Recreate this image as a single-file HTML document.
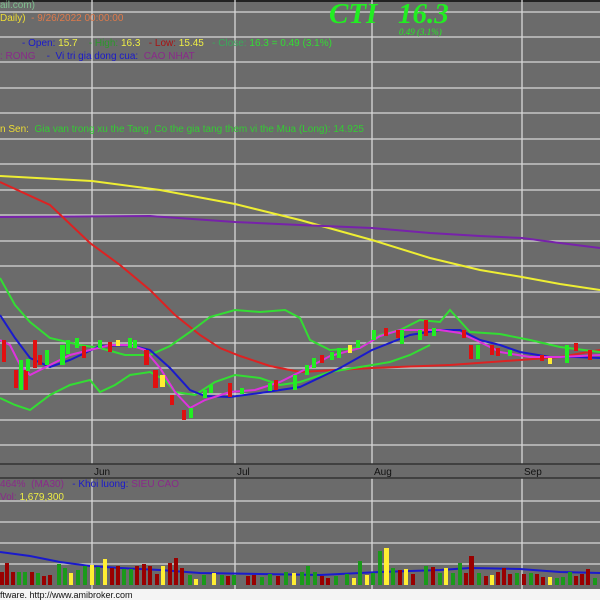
<!DOCTYPE html>
<html><head><meta charset="utf-8"><style>
body{margin:0;width:600px;height:600px;overflow:hidden;background:#6b6b6b;font-family:"Liberation Sans",sans-serif}
svg{position:absolute;left:0;top:0}
.t{position:absolute;font-size:10px;white-space:nowrap;line-height:12px}
</style></head><body>
<svg width="600" height="600" xmlns="http://www.w3.org/2000/svg">
<rect width="600" height="600" fill="#6b6b6b"/>
<rect width="600" height="2" fill="#222"/>
<g stroke="#d8d8d8" stroke-width="1.3">
<line x1="0" y1="12" x2="600" y2="12"/><line x1="0" y1="37" x2="600" y2="37"/><line x1="0" y1="62" x2="600" y2="62"/><line x1="0" y1="88" x2="600" y2="88"/><line x1="0" y1="113" x2="600" y2="113"/><line x1="0" y1="139" x2="600" y2="139"/><line x1="0" y1="164" x2="600" y2="164"/><line x1="0" y1="190" x2="600" y2="190"/><line x1="0" y1="215" x2="600" y2="215"/><line x1="0" y1="241" x2="600" y2="241"/><line x1="0" y1="266" x2="600" y2="266"/><line x1="0" y1="292" x2="600" y2="292"/><line x1="0" y1="317" x2="600" y2="317"/><line x1="0" y1="343" x2="600" y2="343"/><line x1="0" y1="368" x2="600" y2="368"/><line x1="0" y1="394" x2="600" y2="394"/><line x1="0" y1="420" x2="600" y2="420"/><line x1="0" y1="445" x2="600" y2="445"/>
<line x1="0" y1="501" x2="600" y2="501"/><line x1="0" y1="522" x2="600" y2="522"/><line x1="0" y1="543" x2="600" y2="543"/><line x1="0" y1="564" x2="600" y2="564"/>
<line x1="92" y1="0" x2="92" y2="589"/><line x1="235" y1="0" x2="235" y2="589"/><line x1="372" y1="0" x2="372" y2="589"/><line x1="522" y1="0" x2="522" y2="589"/>
</g>
<rect x="0" y="464" width="600" height="14" fill="#6b6b6b"/>
<line x1="0" y1="464" x2="600" y2="464" stroke="#333" stroke-width="1.5"/>
<line x1="0" y1="478" x2="600" y2="478" stroke="#333" stroke-width="1.5"/>
<g font-size="10" fill="#111" font-family="Liberation Sans"><text x="94" y="475">Jun</text><text x="237" y="475">Jul</text><text x="374" y="475">Aug</text><text x="524" y="475">Sep</text></g>
<g fill="none" stroke-width="2">
<polyline stroke="#eeee33" points="0,176 92,181 160,190 235,204 300,220 372,240 430,258 480,270 522,277 560,284 600,290"/>
<polyline stroke="#7722aa" points="0,217 150,216 235,222 300,225 372,228 430,233 480,236 522,238 560,243 600,248"/>
<polyline stroke="#dd2222" points="0,182 50,205 90,243 120,265 150,290 175,315 200,335 220,348 240,356 270,366 300,372 372,368 450,365 520,360 560,357 600,350"/>
<polyline stroke="#33dd33" points="0,278 15,305 30,322 50,338 80,345 100,348 125,355 150,355 170,346 190,332 210,317 235,310 260,312 285,310 300,318 310,340 330,350 360,348 380,335 400,330 420,320 440,322 450,310 470,332 500,334 530,340 560,347 600,352"/>
<polyline stroke="#33dd33" points="0,398 15,405 30,410 50,395 70,385 90,380 100,392 115,385 130,375 150,372 165,380 175,392 195,395 215,382 235,375 260,378 280,385 300,382 330,372 360,367 390,362 410,355 430,345"/>
<polyline stroke="#1a1acc" points="0,315 15,338 30,358 50,367 70,360 100,346 130,345 150,350 170,368 190,390 205,396 230,397 260,393 300,387 340,368 372,350 410,335 440,330 460,330 480,340 500,345 520,352 550,357 575,357 600,358"/>
<polyline stroke="#dd33dd" points="0,340 10,345 20,365 30,375 50,365 70,355 90,350 110,345 130,345 145,350 160,368 175,392 190,408 205,400 230,392 255,390 280,382 300,372 330,356 360,348 380,336 400,330 420,330 440,330 460,333 480,342 500,352 530,357 560,357 580,356 600,355"/>
</g>
<g>
<rect x="2" y="340" width="4" height="22" fill="#e01010"/><rect x="14" y="370" width="4" height="18" fill="#e01010"/><rect x="24" y="370" width="4" height="20" fill="#e01010"/><rect x="33" y="340" width="4" height="28" fill="#e01010"/><rect x="38" y="355" width="4" height="10" fill="#e01010"/>
<rect x="19" y="360" width="4" height="30" fill="#22ee22"/><rect x="26" y="359" width="4" height="12" fill="#22ee22"/><rect x="45" y="350" width="4" height="15" fill="#22ee22"/>
<rect x="60" y="345" width="5" height="20" fill="#22ee22"/><rect x="66" y="340" width="4" height="14" fill="#22ee22"/><rect x="75" y="338" width="4" height="10" fill="#22ee22"/><rect x="82" y="346" width="4" height="12" fill="#e01010"/>
<rect x="98" y="340" width="4" height="8" fill="#22ee22"/><rect x="108" y="342" width="4" height="10" fill="#e01010"/><rect x="116" y="340" width="4" height="6" fill="#ffee33"/><rect x="128" y="338" width="4" height="10" fill="#22ee22"/><rect x="133" y="340" width="4" height="8" fill="#22ee22"/>
<rect x="144" y="350" width="5" height="15" fill="#e01010"/><rect x="153" y="370" width="5" height="18" fill="#e01010"/><rect x="160" y="375" width="5" height="12" fill="#ffee33"/><rect x="170" y="395" width="4" height="10" fill="#e01010"/><rect x="182" y="410" width="4" height="10" fill="#e01010"/><rect x="189" y="408" width="4" height="10" fill="#22ee22"/>
<rect x="203" y="390" width="4" height="8" fill="#22ee22"/><rect x="209" y="385" width="4" height="8" fill="#22ee22"/><rect x="228" y="383" width="4" height="14" fill="#e01010"/><rect x="240" y="388" width="4" height="6" fill="#22ee22"/><rect x="268" y="383" width="4" height="8" fill="#22ee22"/><rect x="274" y="380" width="4" height="10" fill="#e01010"/><rect x="293" y="375" width="4" height="15" fill="#22ee22"/><rect x="305" y="365" width="4" height="10" fill="#22ee22"/><rect x="312" y="358" width="4" height="10" fill="#22ee22"/><rect x="320" y="355" width="4" height="8" fill="#e01010"/><rect x="330" y="352" width="4" height="8" fill="#22ee22"/><rect x="337" y="348" width="4" height="10" fill="#22ee22"/><rect x="348" y="345" width="4" height="8" fill="#ffee33"/><rect x="356" y="340" width="4" height="8" fill="#22ee22"/><rect x="372" y="330" width="4" height="10" fill="#22ee22"/><rect x="384" y="328" width="4" height="8" fill="#e01010"/><rect x="396" y="330" width="4" height="8" fill="#e01010"/><rect x="400" y="330" width="4" height="14" fill="#22ee22"/><rect x="418" y="330" width="4" height="10" fill="#22ee22"/><rect x="424" y="320" width="4" height="16" fill="#e01010"/><rect x="432" y="328" width="4" height="8" fill="#22ee22"/><rect x="462" y="330" width="4" height="8" fill="#e01010"/><rect x="469" y="345" width="4" height="14" fill="#e01010"/><rect x="476" y="345" width="4" height="14" fill="#22ee22"/><rect x="490" y="345" width="4" height="10" fill="#e01010"/><rect x="496" y="348" width="4" height="8" fill="#e01010"/><rect x="508" y="350" width="4" height="6" fill="#22ee22"/><rect x="540" y="355" width="4" height="6" fill="#e01010"/><rect x="548" y="358" width="4" height="6" fill="#ffee33"/><rect x="565" y="345" width="4" height="18" fill="#22ee22"/><rect x="574" y="343" width="4" height="8" fill="#e01010"/><rect x="588" y="350" width="4" height="10" fill="#e01010"/>
</g>
<polyline fill="none" stroke="#1a1acc" stroke-width="2" points="0,552 30,556 60,562 90,566 120,568 160,570 200,573 260,574 320,575 380,572 440,570 470,568 520,569 560,572 600,573"/>
<rect x="0" y="589" width="600" height="11" fill="#f4f4f4"/>
<text x="0" y="598" font-size="9" fill="#111" font-family="Liberation Sans">ftware.  http://www.amibroker.com</text>
<text x="329" y="23" font-size="29" font-weight="bold" font-style="italic" font-family="Liberation Serif" fill="#22ee22">CTI</text>
<text x="398" y="23" font-size="29" font-weight="bold" font-style="italic" font-family="Liberation Serif" fill="#22ee22">16.3</text>
<text x="399" y="35" font-size="9" font-style="italic" font-family="Liberation Serif" fill="#22ee22">0.49 (3.1%)</text>
</svg>
<svg width="600" height="600" style="position:absolute;left:0;top:0">
<g>
<rect x="0" y="572" width="4" height="13" fill="#990000"/><rect x="5" y="563" width="4" height="22" fill="#990000"/><rect x="11" y="572" width="4" height="13" fill="#990000"/><rect x="17" y="572" width="4" height="13" fill="#1a9a1a"/><rect x="23" y="572" width="4" height="13" fill="#1a9a1a"/><rect x="30" y="572" width="4" height="13" fill="#990000"/><rect x="36" y="573" width="4" height="12" fill="#1a9a1a"/><rect x="42" y="576" width="4" height="9" fill="#990000"/><rect x="48" y="575" width="4" height="10" fill="#990000"/><rect x="57" y="564" width="4" height="21" fill="#1a9a1a"/><rect x="63" y="568" width="4" height="17" fill="#1a9a1a"/><rect x="69" y="573" width="4" height="12" fill="#ffee33"/><rect x="76" y="570" width="4" height="15" fill="#1a9a1a"/><rect x="83" y="566" width="4" height="19" fill="#1a9a1a"/><rect x="90" y="565" width="4" height="20" fill="#ffee33"/><rect x="96" y="567" width="4" height="18" fill="#1a9a1a"/><rect x="103" y="559" width="4" height="26" fill="#ffee33"/><rect x="110" y="568" width="4" height="17" fill="#990000"/><rect x="116" y="566" width="4" height="19" fill="#990000"/><rect x="122" y="569" width="4" height="16" fill="#1a9a1a"/><rect x="129" y="569" width="4" height="16" fill="#1a9a1a"/><rect x="135" y="566" width="4" height="19" fill="#990000"/><rect x="142" y="564" width="4" height="21" fill="#990000"/><rect x="148" y="566" width="4" height="19" fill="#990000"/><rect x="155" y="574" width="4" height="11" fill="#990000"/><rect x="161" y="566" width="4" height="19" fill="#ffee33"/><rect x="168" y="563" width="4" height="22" fill="#990000"/><rect x="174" y="558" width="4" height="27" fill="#990000"/><rect x="180" y="568" width="4" height="17" fill="#990000"/><rect x="188" y="575" width="4" height="10" fill="#1a9a1a"/><rect x="194" y="579" width="4" height="6" fill="#ffee33"/><rect x="202" y="575" width="4" height="10" fill="#1a9a1a"/><rect x="212" y="573" width="4" height="12" fill="#ffee33"/><rect x="220" y="575" width="4" height="10" fill="#1a9a1a"/><rect x="226" y="576" width="4" height="9" fill="#990000"/><rect x="232" y="575" width="4" height="10" fill="#1a9a1a"/><rect x="246" y="576" width="4" height="9" fill="#990000"/><rect x="252" y="575" width="4" height="10" fill="#990000"/><rect x="260" y="577" width="4" height="8" fill="#1a9a1a"/><rect x="268" y="574" width="4" height="11" fill="#1a9a1a"/><rect x="276" y="576" width="4" height="9" fill="#990000"/><rect x="284" y="572" width="4" height="13" fill="#1a9a1a"/><rect x="292" y="573" width="4" height="12" fill="#ffee33"/>
<rect x="300" y="572" width="4" height="13" fill="#1a9a1a"/><rect x="306" y="566" width="4" height="19" fill="#1a9a1a"/><rect x="313" y="572" width="4" height="13" fill="#1a9a1a"/><rect x="320" y="576" width="4" height="9" fill="#990000"/><rect x="326" y="578" width="4" height="7" fill="#990000"/><rect x="334" y="576" width="4" height="9" fill="#1a9a1a"/><rect x="345" y="574" width="4" height="11" fill="#1a9a1a"/><rect x="352" y="578" width="4" height="7" fill="#ffee33"/><rect x="358" y="561" width="4" height="24" fill="#1a9a1a"/><rect x="365" y="575" width="4" height="10" fill="#ffee33"/><rect x="371" y="573" width="4" height="12" fill="#1a9a1a"/><rect x="378" y="551" width="4" height="34" fill="#1a9a1a"/><rect x="384" y="548" width="5" height="37" fill="#ffee33"/><rect x="391" y="568" width="4" height="17" fill="#1a9a1a"/><rect x="398" y="570" width="4" height="15" fill="#990000"/><rect x="404" y="569" width="4" height="16" fill="#ffee33"/><rect x="411" y="574" width="4" height="11" fill="#990000"/><rect x="424" y="566" width="4" height="19" fill="#1a9a1a"/><rect x="431" y="567" width="4" height="18" fill="#990000"/><rect x="438" y="573" width="4" height="12" fill="#1a9a1a"/><rect x="444" y="568" width="4" height="17" fill="#ffee33"/><rect x="451" y="573" width="4" height="12" fill="#1a9a1a"/><rect x="458" y="563" width="4" height="22" fill="#1a9a1a"/><rect x="464" y="573" width="4" height="12" fill="#990000"/><rect x="469" y="556" width="5" height="29" fill="#990000"/><rect x="477" y="573" width="4" height="12" fill="#1a9a1a"/><rect x="484" y="576" width="4" height="9" fill="#990000"/><rect x="490" y="575" width="4" height="10" fill="#ffee33"/><rect x="496" y="572" width="4" height="13" fill="#990000"/><rect x="502" y="568" width="4" height="17" fill="#990000"/><rect x="508" y="574" width="4" height="11" fill="#990000"/><rect x="515" y="573" width="4" height="12" fill="#1a9a1a"/><rect x="522" y="574" width="4" height="11" fill="#990000"/><rect x="529" y="573" width="4" height="12" fill="#1a9a1a"/><rect x="535" y="574" width="4" height="11" fill="#990000"/><rect x="541" y="577" width="4" height="8" fill="#990000"/><rect x="548" y="577" width="4" height="8" fill="#ffee33"/><rect x="555" y="578" width="4" height="7" fill="#1a9a1a"/><rect x="561" y="577" width="4" height="8" fill="#1a9a1a"/><rect x="568" y="572" width="4" height="13" fill="#1a9a1a"/><rect x="574" y="576" width="4" height="9" fill="#990000"/><rect x="580" y="574" width="4" height="11" fill="#990000"/><rect x="586" y="569" width="4" height="16" fill="#990000"/><rect x="593" y="578" width="4" height="7" fill="#1a9a1a"/>
</g></svg>
<div class="t" style="left:0;top:0;color:#7fbf8f">ail.com)</div>
<div class="t" style="left:0;top:13px;color:#eedd33">Daily) <span style="color:#e07a4a">&nbsp;- 9/26/2022 00:00:00</span></div>
<div class="t" style="left:22px;top:38px;color:#1a1acc">- Open: <span style="color:#eeee44">15.7</span> &nbsp;&nbsp;&nbsp;<span style="color:#2a9a2a">- High:</span> <span style="color:#eeee44">16.3</span> &nbsp;&nbsp;<span style="color:#aa1111">- Low:</span> <span style="color:#eeee44">15.45</span> &nbsp;&nbsp;<span style="color:#3aaa5a">- Close:</span> <span style="color:#33dd33">16.3 = 0.49 (3.1%)</span></div>
<div class="t" style="left:0;top:51px;color:#8a2a8a">: RONG &nbsp;&nbsp;&nbsp;<span style="color:#1a1acc">- &nbsp;Vi tri gia dong cua:</span> &nbsp;CAO NHAT</div>
<div class="t" style="left:0;top:124px;color:#eedd33">n Sen: <span style="color:#33cc33">&nbsp;Gia van trong xu the Tang, Co the gia tang them vi the Mua (Long): 14.925</span></div>
<div class="t" style="left:0;top:479px;color:#8a2a8a">464% &nbsp;(MA30) &nbsp;&nbsp;<span style="color:#1a1acc">- Khoi luong:</span> SIEU CAO</div>
<div class="t" style="left:0;top:492px;color:#8a2a8a">Vol: <span style="color:#eeee44">1,679,300</span></div>
</body></html>
